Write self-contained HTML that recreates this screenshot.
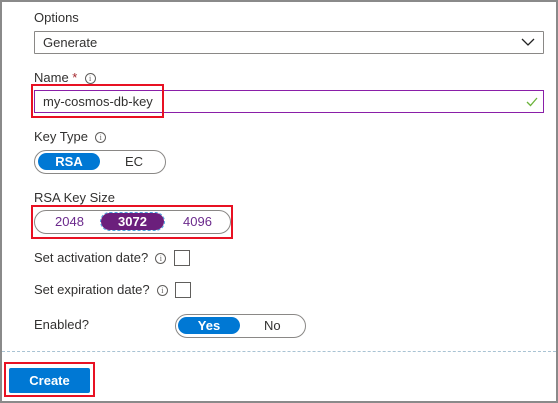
<!DOCTYPE html><html><head><style>
*{box-sizing:border-box;margin:0;padding:0}
body{width:558px;height:403px;background:#fff;font-family:"Segoe UI","Liberation Sans",sans-serif;font-size:13px;color:#323130;position:relative;overflow:hidden}
.frame{position:absolute;left:0;top:0;width:558px;height:403px;border:2px solid #8a8a8a;border-bottom-width:2px}
.a{position:absolute}
.lbl{position:absolute;left:34px;font-size:13px}
.info{display:inline-block;width:11px;height:11px;border:1px solid #605e5c;border-radius:50%;font-size:8px;line-height:9px;text-align:center;color:#605e5c;vertical-align:1px;font-family:"Liberation Serif",serif}
.red{position:absolute;border:2px solid #e81123}
.tog{position:absolute;border:1px solid #8a8886;border-radius:12px;display:flex;align-items:center}
.pill{position:absolute;top:2px;height:17px;border-radius:9px;color:#fff;text-align:center;line-height:17px;font-weight:600}
.cb{position:absolute;width:16px;height:16px;border:1px solid #605e5c;background:#fff}
</style></head><body>
<div class="frame"></div>
<div class="lbl" style="top:10px">Options</div>
<div class="a" style="left:34px;top:31px;width:510px;height:23px;border:1px solid #8a8886;border-radius:1px;padding-left:8px;line-height:21px">Generate
<svg class="a" style="right:8px;top:6px" width="14" height="9" viewBox="0 0 14 9"><path d="M1 1l6 6 6-6" fill="none" stroke="#222" stroke-width="1.3"/></svg></div>
<div class="lbl" style="top:70px">Name <span style="color:#a4262c">*</span>&nbsp; <span class="info">i</span></div>
<div class="a" style="left:34px;top:90px;width:510px;height:23px;border:1px solid #8a1fa8;padding-left:8px;line-height:21px">my-cosmos-db-key
<svg class="a" style="right:5px;top:6px" width="12" height="10" viewBox="0 0 12 10"><path d="M1 5l3.5 3.5L11 1" fill="none" stroke="#6bb33a" stroke-width="1.3"/></svg></div>
<div class="red" style="left:31px;top:84px;width:133px;height:34px"></div>
<div class="lbl" style="top:129px">Key Type&nbsp; <span class="info">i</span></div>
<div class="tog" style="left:34px;top:150px;width:132px;height:24px">
<div class="pill" style="left:3px;width:62px;background:#0078d4">RSA</div>
<div class="a" style="left:90px;top:3px">EC</div></div>
<div class="lbl" style="top:190px">RSA Key Size</div>
<div class="tog" style="left:34px;top:210px;width:197px;height:24px;color:#6b2a8c">
<div class="a" style="left:20px;top:3px">2048</div>
<div class="pill" style="left:66px;width:63px;background:#6b1f7c;outline:1px dashed #4aa3df">3072</div>
<div class="a" style="left:148px;top:3px">4096</div></div>
<div class="red" style="left:31px;top:205px;width:202px;height:34px"></div>
<div class="lbl" style="top:250px">Set activation date?&nbsp; <span class="info">i</span></div>
<div class="cb" style="left:174px;top:250px"></div>
<div class="lbl" style="top:282px">Set expiration date?&nbsp; <span class="info">i</span></div>
<div class="cb" style="left:175px;top:282px"></div>
<div class="lbl" style="top:317px">Enabled?</div>
<div class="tog" style="left:175px;top:314px;width:131px;height:24px">
<div class="pill" style="left:2px;width:62px;background:#0078d4">Yes</div>
<div class="a" style="left:88px;top:3px">No</div></div>
<div class="a" style="left:2px;top:351px;width:554px;border-top:1px dashed #a9c3d3"></div>
<div class="a" style="left:9px;top:368px;width:81px;height:25px;background:#0078d4;border-radius:2px;color:#fff;font-weight:600;text-align:center;line-height:25px">Create</div>
<div class="red" style="left:4px;top:362px;width:91px;height:35px"></div>
</body></html>
